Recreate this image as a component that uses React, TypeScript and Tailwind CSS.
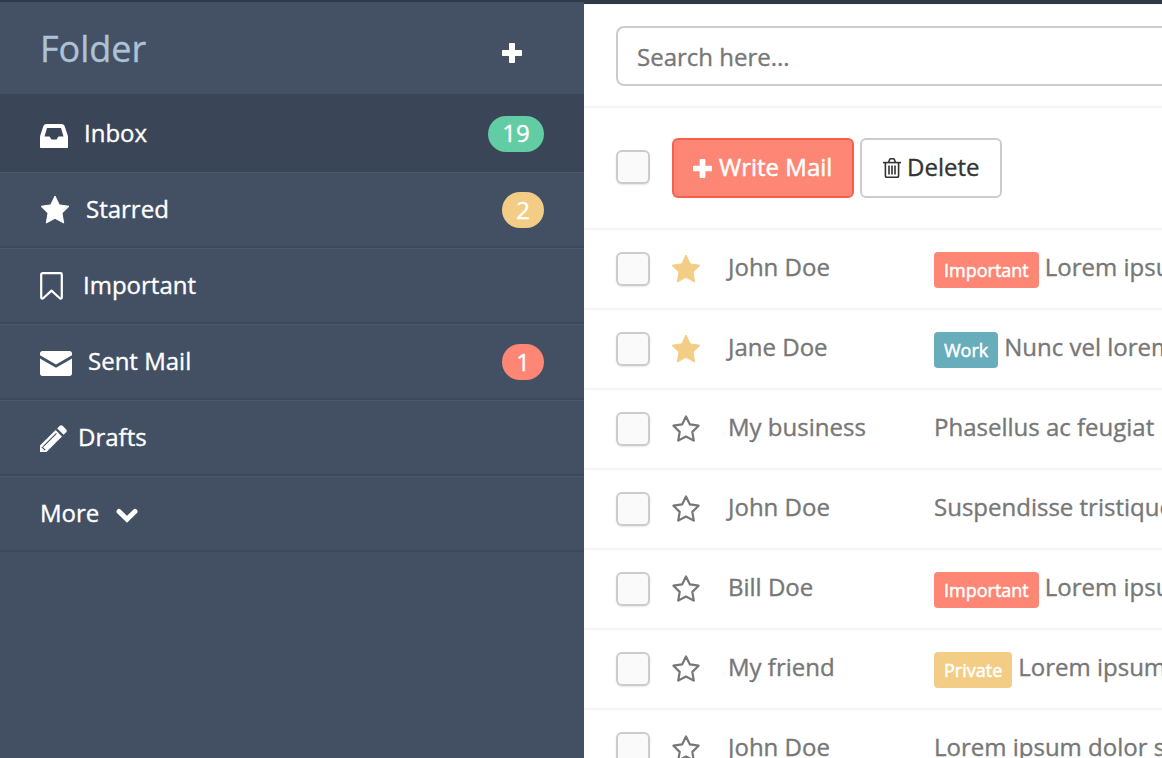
import type { ReactNode } from "react";

const InboxIcon = () => (
  <svg viewBox="0 0 28 24" className="w-[28px] h-[24px] mt-[3px]" fill="currentColor">
    <path fillRule="evenodd" d="M6.5 0H21.5C23 0 24 .8 24.6 2L27.6 11C27.9 12 28 12.8 28 13.6V23C28 23.6 27.6 24 27 24H1C.4 24 0 23.6 0 23V13.6C0 12.8.1 12 .4 11L3.4 2C4 .8 5 0 6.5 0ZM7 4L4.5 12.5H9.5L11.5 15.5H16.5L18.5 12.5H23.5L21 4Z" />
  </svg>
);
const StarShape = ({ className }: { className: string }) => (
  <svg viewBox="0 0 30 29" className={className} fill="currentColor" stroke="currentColor" strokeWidth="1" strokeLinejoin="round">
    <path d="M15 1L19.3 9.9L29 11.3L22 18.2L23.7 28L15 23.3L6.3 28L8 18.2L1 11.3L10.7 9.9Z" />
  </svg>
);
const StarOutline = ({ className }: { className: string }) => (
  <svg viewBox="0 0 30 29" className={className} fill="none" stroke="currentColor" strokeWidth="2.2" strokeLinejoin="round">
    <path d="M15 2.4L18.9 10.4L27.6 11.7L21.3 17.9L22.8 26.6L15 22.5L7.2 26.6L8.7 17.9L2.4 11.7L11.1 10.4Z" />
  </svg>
);
const BookmarkIcon = () => (
  <svg viewBox="0 0 23 28" className="w-[23px] h-[28px]" fill="none" stroke="currentColor" strokeWidth="2.2" strokeLinejoin="round">
    <path d="M2.5 1.2H20.5C21.2 1.2 21.8 1.8 21.8 2.5V25.2C21.8 26.6 20.6 27 19.8 26.2L11.5 18.6L3.2 26.2C2.4 27 1.2 26.6 1.2 25.2V2.5C1.2 1.8 1.8 1.2 2.5 1.2Z" />
  </svg>
);
const EnvelopeIcon = () => (
  <svg viewBox="0 0 32 25" className="w-[32px] h-[25px] mt-[3px]" fill="currentColor">
    <path d="M2.5 0H29.5C31 0 32 1 32 2.5V4.2L16 13.6L0 4.2V2.5C0 1 1 0 2.5 0Z" />
    <path d="M0 7.4L16 16.8L32 7.4V22.5C32 24 31 25 29.5 25H2.5C1 25 0 24 0 22.5Z" />
  </svg>
);
const PencilIcon = () => (
  <svg viewBox="0 0 27 27" className="w-[27px] h-[27px] mt-[1px]" fill="currentColor">
    <path d="M0 27V20.6L15.6 5L22 11.4L6.4 27Z" />
    <path d="M17.2 3.4L19.6 1C20.6 0 21.8 0 22.8 1L26 4.2C27 5.2 27 6.4 26 7.4L23.6 9.8Z" />
    <path d="M3.2 21.6L16.4 8.4" stroke="#435064" strokeWidth="1.1" fill="none" />
    <path d="M1.8 21.8L5.2 25.2" stroke="#435064" strokeWidth="1.2" fill="none" />
  </svg>
);
const ChevronIcon = () => (
  <svg viewBox="0 0 22 15" className="w-[22px] h-[15px] ml-[17px] mt-[3px]" fill="none" stroke="currentColor" strokeWidth="5" strokeLinecap="round" strokeLinejoin="miter">
    <path d="M3 3.5L11 11.2L19 3.5" />
  </svg>
);
const PlusIcon = ({ className }: { className: string }) => (
  <svg viewBox="0 0 20 20" className={className} fill="currentColor">
    <path d="M8 0H12C12.6 0 13 .4 13 1V7H19C19.6 7 20 7.4 20 8V12C20 12.6 19.6 13 19 13H13V19C13 19.6 12.6 20 12 20H8C7.4 20 7 19.6 7 19V13H1C.4 13 0 12.6 0 12V8C0 7.4 .4 7 1 7H7V1C7 .4 7.4 0 8 0Z" />
  </svg>
);
const TrashIcon = () => (
  <svg viewBox="0 0 18 20" className="w-[18px] h-[20px] mr-[6px] mt-[2px] shrink-0" fill="none" stroke="currentColor" strokeWidth="1.6">
    <path d="M0 4.6H18" />
    <path d="M2.4 4.6V17.4C2.4 18.6 3.2 19.2 4 19.2H14C14.8 19.2 15.6 18.6 15.6 17.4V4.6" />
    <path d="M5.6 4.4L6.6 1.6C6.8 1.1 7.2.8 7.8.8H10.2C10.8.8 11.2 1.1 11.4 1.6L12.4 4.4" />
    <path d="M6 7.6V16.4M9 7.6V16.4M12 7.6V16.4" />
  </svg>
);

type NavItem = { icon: ReactNode; label: string; gap: string; badge?: string; badgeClass?: string };

const nav: NavItem[] = [
  { icon: <StarShape className="w-[30px] h-[29px]" />, label: "Starred", gap: "ml-4", badge: "2", badgeClass: "bg-[#f3cd85] w-[42px]" },
  { icon: <BookmarkIcon />, label: "Important", gap: "ml-[20px]" },
  { icon: <EnvelopeIcon />, label: "Sent Mail", gap: "ml-4", badge: "1", badgeClass: "bg-[#fe8675] w-[42px]" },
  { icon: <PencilIcon />, label: "Drafts", gap: "ml-[11px]" },
];

type Row = { name: string; star?: boolean; tag?: string; tagClass?: string; text: string };

const rows: Row[] = [
  { name: "John Doe", star: true, tag: "Important", tagClass: "bg-[#fe8675]", text: "Lorem ipsum dolor sit amet" },
  { name: "Jane Doe", star: true, tag: "Work", tagClass: "bg-[#67adbb]", text: "Nunc vel lorem eget" },
  { name: "My business", text: "Phasellus ac feugiat nibh" },
  { name: "John Doe", text: "Suspendisse tristique ultrices" },
  { name: "Bill Doe", tag: "Important", tagClass: "bg-[#fe8675]", text: "Lorem ipsum dolor sit amet" },
  { name: "My friend", tag: "Private", tagClass: "bg-[#f3cd85]", text: "Lorem ipsum dolor sit amet" },
  { name: "John Doe", text: "Lorem ipsum dolor sit amet" },
];

function Check({ extra = "" }: { extra?: string }) {
  return <div className={`w-[34px] h-[34px] shrink-0 rounded-md border-2 border-[#cccccc] bg-[#fafafa] shadow-[0_1px_2px_rgba(0,0,0,0.1)] ${extra}`} />;
}

const rowLines = "h-[76px] flex items-center pl-[40px] pr-[40px] border-t border-t-[#4a596e] border-b-2 border-b-[#3d495a]";

export default function App() {
  return (
    <div className="w-[1162px] h-[758px] overflow-hidden flex flex-col bg-white font-['Open_Sans',sans-serif] [-webkit-text-stroke:0.35px]">
      <div className="h-[2px] shrink-0 bg-[#303a47]" />
      <div className="flex flex-1 min-h-0">
        <aside className="w-[584px] shrink-0 bg-[#435064] text-white">
          <div className="h-[92px] flex items-center justify-between pl-[40px] pr-[62px] bg-[#445165]">
            <span className="text-[36px] leading-none text-[#adc2d6] mt-[2px]">Folder</span>
            <PlusIcon className="w-[20px] h-[20px] mt-[9px]" />
          </div>
          <div className="h-[78px] flex items-center pl-[40px] pr-[40px] pt-[2px] bg-[#3a4657]">
            <InboxIcon />
            <span className="ml-4 text-[24px] leading-none mb-[2px]">Inbox</span>
            <span className="ml-auto h-[36px] w-[56px] rounded-full flex items-center justify-center text-[24px] pb-[2px] bg-[#62cca5]">19</span>
          </div>
          {nav.map((n) => (
            <div key={n.label} className={rowLines}>
              {n.icon}
              <span className={`${n.gap} text-[24px] leading-none mb-[2px]`}>{n.label}</span>
              {n.badge && (
                <span className={`ml-auto h-[36px] rounded-full flex items-center justify-center text-[24px] ${n.badgeClass}`}>{n.badge}</span>
              )}
            </div>
          ))}
          <div className={rowLines}>
            <span className="text-[24px] leading-none mb-[2px]">More</span>
            <ChevronIcon />
          </div>
        </aside>
        <main className="flex-1 min-w-0 overflow-hidden">
          <div className="h-[3px] bg-[#303a47] -mt-px" />
          <div className="h-[104px] border-t border-[#f2f6fa] border-b-2 border-b-[#f2f6fa] pl-[32px] pt-[21px]">
            <div className="w-[800px] h-[60px] rounded-lg border-2 border-[#cccccc] flex items-center pl-[19px] pt-[2px] text-[24px] text-[#777777]">Search here...</div>
          </div>
          <div className="h-[120px] flex items-center pl-[32px]">
            <Check extra="mb-[2px]" />
            <div className="ml-[22px] h-[60px] w-[182px] rounded-md border-2 border-[#fb5e4a] bg-[#fe8675] text-white text-[24px] flex items-center pl-[19px] pb-[2px] [-webkit-text-stroke:0.5px]">
              <PlusIcon className="w-[19px] h-[19px] mr-[7px] mt-[2px] shrink-0" />Write Mail
            </div>
            <div className="ml-[6px] h-[60px] w-[142px] rounded-md border-2 border-[#cccccc] text-[#333333] text-[24px] flex items-center pl-[21px] pb-[2px]">
              <TrashIcon />Delete
            </div>
          </div>
          {rows.map((r, i) => (
            <div key={i} className="h-[80px] flex items-center pl-[32px] border-t-2 border-[#f2f6fa] whitespace-nowrap text-[24px] text-[#777777]">
              <Check />
              {r.star ? <StarShape className="ml-[21px] mb-[2px] w-[30px] h-[29px] text-[#f3cd85] shrink-0" /> : <StarOutline className="ml-[21px] mb-[2px] w-[30px] h-[29px] text-[#777777] shrink-0" />}
              <span className="ml-[27px] mb-1 w-[206px] shrink-0">{r.name}</span>
              {r.tag && <span className={`h-[36px] px-[10px] mr-[6px] mt-[2px] rounded-[4px] text-white text-[18px] flex items-center [-webkit-text-stroke:0.5px] ${r.tagClass}`}>{r.tag}</span>}
              <span className="mb-1">{r.text}</span>
            </div>
          ))}
        </main>
      </div>
    </div>
  );
}
